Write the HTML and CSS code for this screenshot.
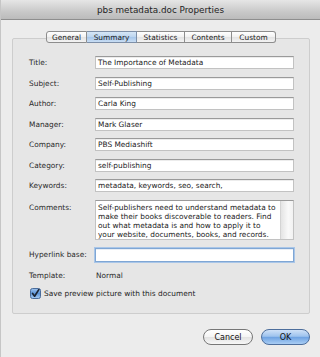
FILE: index.html
```html
<!DOCTYPE html>
<html>
<head>
<meta charset="utf-8">
<link rel="stylesheet" href="styles.css">
</head>
<body>
<div class="window">
  <div class="titlebar">pbs metadata.doc Properties</div>
  <div class="content">
    <div class="tabs">
      <div class="tab tab-general">General</div>
      <div class="tab tab-summary selected">Summary</div>
      <div class="tab tab-statistics">Statistics</div>
      <div class="tab tab-contents">Contents</div>
      <div class="tab tab-custom">Custom</div>
    </div>
    <div class="group">
      <div class="row"><div class="label">Title:</div><div class="field">The Importance of Metadata</div></div>
      <div class="row"><div class="label">Subject:</div><div class="field">Self-Publishing</div></div>
      <div class="row"><div class="label">Author:</div><div class="field">Carla King</div></div>
      <div class="row"><div class="label">Manager:</div><div class="field">Mark Glaser</div></div>
      <div class="row"><div class="label">Company:</div><div class="field">PBS Mediashift</div></div>
      <div class="row"><div class="label">Category:</div><div class="field">self-publishing</div></div>
      <div class="row"><div class="label">Keywords:</div><div class="field">metadata, keywords, seo, search,</div></div>
      <div class="row row-top"><div class="label label-top">Comments:</div>
        <div class="textarea">
          <div class="textarea-text">Self-publishers need to understand metadata to<br>make their books discoverable to readers. Find<br>out what metadata is and how to apply it to<br>your website, documents, books, and records.</div>
          <div class="scrolltrack"></div>
        </div>
      </div>
      <div class="row row-link"><div class="label">Hyperlink base:</div><div class="field focused"></div></div>
      <div class="row row-template"><div class="label">Template:</div><div class="plain">Normal</div></div>
      <div class="check-row">
        <svg class="checkbox" width="11" height="11" viewBox="0 0 11 11">
          <defs>
            <linearGradient id="cb" x1="0" y1="0" x2="0" y2="1">
              <stop offset="0" stop-color="#9fc3ee"/>
              <stop offset="0.5" stop-color="#5d95d8"/>
              <stop offset="1" stop-color="#a9cdf3"/>
            </linearGradient>
          </defs>
          <rect x="0.5" y="0.5" width="10" height="10" rx="2" fill="url(#cb)" stroke="#4a6c9a"/>
          <path d="M2.6 5.4 L4.6 8.2 L8.8 1.6" fill="none" stroke="#1b2433" stroke-width="1.7" stroke-linecap="round" stroke-linejoin="round"/>
        </svg>
        <span>Save preview picture with this document</span>
      </div>
    </div>
    <div class="buttons">
      <div class="btn btn-cancel">Cancel</div>
      <div class="btn btn-ok">OK</div>
    </div>
  </div>
</div>
</body>
</html>
```

FILE: styles.css
```css
html, body {
  margin: 0;
  padding: 0;
}
body {
  width: 320px;
  height: 357px;
  overflow: hidden;
  background: #ececec;
  font-family: "DejaVu Sans", "Liberation Sans", sans-serif;
  font-size: 7.4px;
  color: #222;
}
.window {
  width: 320px;
  height: 357px;
  background: #ececec;
  box-sizing: border-box;
  border-left: 1px solid #c6c6c6;
}
.titlebar {
  height: 20px;
  box-sizing: border-box;
  border-bottom: 1px solid #8e8e8e;
  background: linear-gradient(#e6e6e6, #c9c9c9 60%, #bbbbbb);
  font-size: 8.8px;
  color: #1e1e1e;
  display: flex;
  align-items: center;
  justify-content: center;
  padding-top: 1px;
}
.content {
  padding: 11px 10px 0 11px;
}
.tabs {
  position: relative;
  z-index: 1;
  display: flex;
  justify-content: center;
  height: 12px;
  margin-bottom: -5px;
}
.tab {
  box-sizing: border-box;
  height: 12px;
  display: flex;
  align-items: center;
  justify-content: center;
  border: 1px solid #8d8d8d;
  border-left: none;
  background: linear-gradient(#ffffff, #f1f1f1 50%, #e3e3e3 51%, #f3f3f3);
  color: #1a1a1a;
}
.tab-general { width: 41px; border-left: 1px solid #8d8d8d; border-radius: 3px 0 0 3px; }
.tab-summary { width: 50px; }
.tab-statistics { width: 48px; }
.tab-contents { width: 47px; }
.tab-custom { width: 44px; border-radius: 0 3px 3px 0; }
.tab.selected {
  background: linear-gradient(#d6e6f6, #bcd5ef 50%, #a6c6ea 51%, #c8ddf3);
  border-color: #7d8fa8;
}
.group {
  box-sizing: border-box;
  height: 276px;
  border: 1px solid #cdcdcd;
  border-radius: 2px;
  background: #e6e6e6;
  padding: 17px 15px 0 16px;
  display: flex;
  flex-direction: column;
  gap: 7.5px;
}
.row {
  display: flex;
  align-items: center;
  height: 13px;
}
.label {
  width: 66px;
  flex: none;
  color: #2a2a2a;
}
.field {
  flex: 1;
  height: 13px;
  box-sizing: border-box;
  background: #ffffff;
  border: 1px solid #c2c2c2;
  border-top-color: #9a9a9a;
  box-shadow: inset 0 1px 0 #ececec;
  padding: 0 2px;
  display: flex;
  align-items: center;
  color: #1a1a1a;
  white-space: nowrap;
  overflow: hidden;
}
.row-top {
  height: 40px;
  align-items: flex-start;
}
.label-top {
  padding-top: 3px;
}
.textarea {
  flex: 1;
  height: 40px;
  box-sizing: border-box;
  background: #ffffff;
  border: 1px solid #c2c2c2;
  border-top-color: #9a9a9a;
  display: flex;
}
.textarea-text {
  flex: 1;
  padding: 2px 0 0 2px;
  line-height: 9px;
  color: #1a1a1a;
  white-space: nowrap;
  overflow: hidden;
}
.scrolltrack {
  width: 12px;
  flex: none;
  border-left: 1px solid #d4d4d4;
  background: linear-gradient(to right, #e4e4e4, #f9f9f9 60%, #f2f2f2);
}
.row-link {
  height: 14px;
  margin-top: 0.5px;
}
.focused {
  height: 14px;
  border: 1px solid #7fa6d4;
  box-shadow: 0 0 0 1px #a9c6e8, inset 0 1px 0 #e8eef6;
}
.plain {
  color: #2a2a2a;
  padding-left: 1px;
}
.check-row {
  display: flex;
  align-items: center;
  gap: 3px;
  margin-top: -2px;
  padding-left: 1px;
  color: #1e1e1e;
}
.checkbox {
  flex: none;
}
.buttons {
  display: flex;
  justify-content: flex-end;
  gap: 8px;
  margin-top: 15px;
}
.btn {
  box-sizing: border-box;
  height: 16px;
  border-radius: 8px;
  display: flex;
  align-items: center;
  justify-content: center;
  font-size: 8px;
  color: #111;
}
.btn-cancel {
  width: 50px;
  border: 1px solid #777;
  background: linear-gradient(#ffffff, #f4f4f4 50%, #e2e2e2 51%, #f7f7f7);
}
.btn-ok {
  width: 49px;
  border: 1px solid #4d6e9c;
  background: linear-gradient(#cfe1f7, #9ec3ee 45%, #6fa3e2 52%, #a9cdf4);
}
```
